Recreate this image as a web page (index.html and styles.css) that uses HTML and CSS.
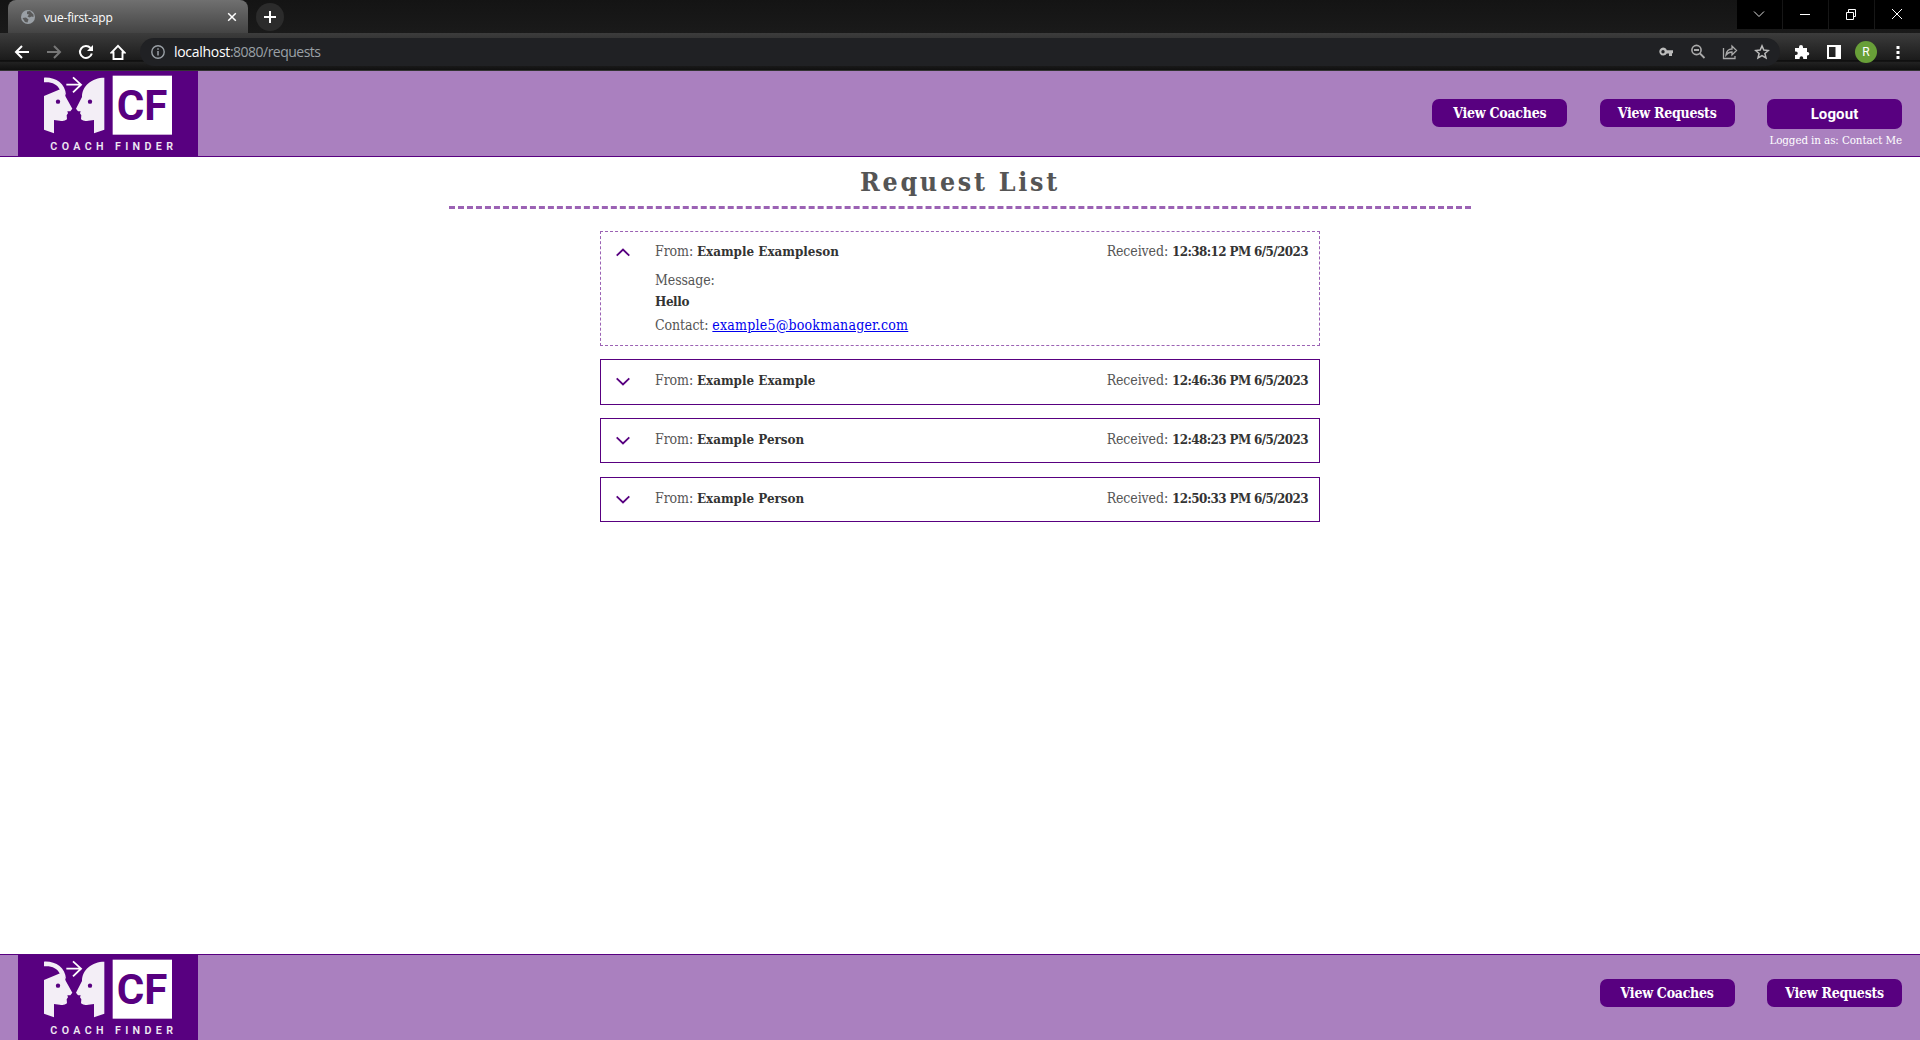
FILE: index.html
```html
<!DOCTYPE html>
<html lang="en">
<head>
<meta charset="utf-8">
<title>vue-first-app</title>
<link rel="stylesheet" href="styles.css">
</head>
<body>
<div class="browser">
  <div class="tab-strip">
    <div class="tab">
      <svg class="globe" width="14" height="14" viewBox="0 0 14 14"><circle cx="7" cy="7" r="7" fill="#9aa0a6"/><path d="M1.500 8 5 7.500 7.500 9.500 6.500 12.500 4 12ZM6 1.500 9 1l3.500 3.500L12.500 7l-2-.5-2 1-2-1L8 4.500 6 4Z" fill="#5a5a5a"/></svg>
      <span class="tab-title">vue-first-app</span>
      <svg class="tab-close" width="10" height="10" viewBox="0 0 10 10"><path d="M1.200 1.200 8.800 8.800M8.800 1.200 1.200 8.800" stroke="#fff" stroke-width="1.500"/></svg>
    </div>
    <div class="new-tab"><svg width="12" height="12" viewBox="0 0 12 12"><path d="M6 0V12M0 6H12" stroke="#fff" stroke-width="2"/></svg></div>
    <div class="window-controls">
      <div class="control"><svg width="12" height="12" viewBox="0 0 12 12"><path d="M1 3.500 6 8.500 11 3.500" fill="none" stroke="#ddd"/></svg></div>
      <div class="control"><svg width="12" height="12" viewBox="0 0 12 12"><path d="M1 6.500H11" stroke="#fff"/></svg></div>
      <div class="control"><svg width="12" height="12" viewBox="0 0 12 12"><path d="M1.500 4.500h7v7h-7zM3.500 4V1.500h7v7H9" fill="none" stroke="#fff"/></svg></div>
      <div class="control"><svg width="12" height="12" viewBox="0 0 12 12"><path d="M1 1 11 11M11 1 1 11" stroke="#fff"/></svg></div>
    </div>
  </div>
  <div class="toolbar">
    <div class="nav-icons">
      <svg width="16" height="16" viewBox="0 0 16 16"><path d="M15 8H2.500M8 2 2 8l6 6" fill="none" stroke="#fff" stroke-width="2"/></svg>
      <svg width="16" height="16" viewBox="0 0 16 16"><path d="M1 8H13.500M8 2l6 6-6 6" fill="none" stroke="#777" stroke-width="2"/></svg>
      <svg width="16" height="16" viewBox="0 0 16 16"><path d="M13.800 9.500A6 6 0 1 1 12.500 4" fill="none" stroke="#fff" stroke-width="2"/><path d="M15 1v6H9z" fill="#fff"/></svg>
      <svg width="16" height="16" viewBox="0 0 16 16"><path d="M1.500 8.500H3.500V15H12.500V8.500H14.500L8 1.800Z" fill="none" stroke="#fff" stroke-width="1.900"/></svg>
    </div>
    <div class="address">
      <svg class="info" width="14" height="14" viewBox="0 0 14 14"><circle cx="7" cy="7" r="6.200" fill="none" stroke="#9aa0a6" stroke-width="1.400"/><path d="M7 6v4.500M7 3.300v1.500" stroke="#9aa0a6" stroke-width="1.500"/></svg>
      <span class="url"><b>localhost</b>:8080/requests</span>
      <div class="page-icons">
        <svg width="16" height="16" viewBox="0 0 16 16"><path fill-rule="evenodd" d="M5 3.500a4 4 0 0 1 3.800 2.800H15v3h-1V12h-3V9.500H8.800A4 4 0 1 1 5 3.500ZM5 6a1.700 1.700 0 1 0 0 3.400A1.700 1.700 0 0 0 5 6Z" fill="#bbb"/></svg>
        <svg width="16" height="16" viewBox="0 0 16 16"><circle cx="6.500" cy="6" r="4.600" fill="none" stroke="#aaa" stroke-width="1.600"/><path d="M4 6h5M10 9.500l4.500 4.500" stroke="#aaa" stroke-width="1.800"/></svg>
        <svg width="16" height="16" viewBox="0 0 16 16"><path d="M1.500 4V14.500H13V12" fill="none" stroke="#aaa" stroke-width="1.300"/><path d="M4 11C4.500 7 7 5 10 5V2l4.500 4.500L10 11V8C7.500 8 5.500 9 4 11Z" fill="none" stroke="#aaa" stroke-width="1.300"/></svg>
        <svg width="16" height="16" viewBox="0 0 16 16"><path d="m8 1.900 1.800 4.200 4.600.4-3.500 3 1.100 4.500L8 11.600 4 14l1.100-4.500-3.500-3 4.600-.4Z" fill="none" stroke="#bbb" stroke-width="1.500"/></svg>
      </div>
    </div>
    <div class="extensions">
      <svg width="16" height="16" viewBox="0 0 16 16"><path d="M1 4h4V3a2 2 0 0 1 4 0v1h4v4h.5a1.800 1.800 0 0 1 0 3.600H13V15H9.200v-1a1.800 1.800 0 0 0-3.600 0v1H1v-4h1a1.700 1.700 0 0 0 0-3.500H1Z" fill="#fff"/></svg>
      <svg width="16" height="16" viewBox="0 0 16 16"><path fill-rule="evenodd" d="M1 1h14v14H1ZM3 3v10h6.500V3Z" fill="#fff"/></svg>
      <span class="avatar">R</span>
      <svg width="16" height="16" viewBox="0 0 16 16"><path d="M6.500 2h3v3h-3zM6.500 7h3v3h-3zM6.500 12h3v3h-3z" fill="#fff"/></svg>
    </div>
  </div>
</div>

<header class="site-bar site-header">
  <svg class="logo" width="180" height="85" viewBox="54 213 540 255">
    <path class="head" d="M132 288 184 266Q194 274 197 290L217 326 211 334H202L204 340 200 346 201 358Q192 366 179 362L162 360V400L132 389Z"/>
    <path class="head" d="M132 233C166 231 196 250 198 285L180 270C172 252 154 245 132 247Z"/>
    <path class="head" d="M313 233C276 233 246 257 246 291L228 326 234 334H242L240 340 244 346 243 358Q252 366 265 362L282 360V400L313 389Z"/>
    <circle class="eye" cx="174" cy="305" r="6.500"/><circle class="eye" cx="270" cy="305" r="6.500"/>
    <path class="arrow" d="M199 254H243M219 232 243 254 219 277"/>
    <rect x="338" y="227" width="178" height="177" fill="#fff"/>
    <text class="monogram" x="350" y="359" textLength="152" lengthAdjust="spacingAndGlyphs">CF</text>
    <text class="brand" x="151" y="451" textLength="368">COACH FINDER</text>
  </svg>
  <nav class="links">
    <a class="button">View Coaches</a>
    <a class="button">View Requests</a>
    <div class="session">
      <button class="button logout">Logout</button>
      <span class="user">Logged in as: Contact Me</span>
    </div>
  </nav>
</header>

<main class="content">
  <h1 class="title">Request List</h1>
  <ul class="requests">
    <li class="request open">
      <svg class="chevron" width="14" height="9" viewBox="0 0 14 9"><path d="M.7 7.700 7 1.500 13.300 7.700"/></svg>
      <div class="details">
        <div class="summary"><span class="from">From: <b>Example Exampleson</b></span><span class="received">Received: <b>12:38:12 PM 6/5/2023</b></span></div>
        <div class="message">Message:<br><b>Hello</b></div>
        <div class="contact">Contact: <a class="mail">example5@bookmanager.com</a></div>
      </div>
    </li>
    <li class="request">
      <svg class="chevron" width="14" height="9" viewBox="0 0 14 9"><path d="M.7 1.300 7 7.500 13.300 1.300"/></svg>
      <div class="details"><div class="summary"><span class="from">From: <b>Example Example</b></span><span class="received">Received: <b>12:46:36 PM 6/5/2023</b></span></div></div>
    </li>
    <li class="request">
      <svg class="chevron" width="14" height="9" viewBox="0 0 14 9"><path d="M.7 1.300 7 7.500 13.300 1.300"/></svg>
      <div class="details"><div class="summary"><span class="from">From: <b>Example Person</b></span><span class="received">Received: <b>12:48:23 PM 6/5/2023</b></span></div></div>
    </li>
    <li class="request">
      <svg class="chevron" width="14" height="9" viewBox="0 0 14 9"><path d="M.7 1.300 7 7.500 13.300 1.300"/></svg>
      <div class="details"><div class="summary"><span class="from">From: <b>Example Person</b></span><span class="received">Received: <b>12:50:33 PM 6/5/2023</b></span></div></div>
    </li>
  </ul>
</main>

<footer class="site-bar site-footer">
  <svg class="logo" width="180" height="85" viewBox="54 213 540 255">
    <path class="head" d="M132 288 184 266Q194 274 197 290L217 326 211 334H202L204 340 200 346 201 358Q192 366 179 362L162 360V400L132 389Z"/>
    <path class="head" d="M132 233C166 231 196 250 198 285L180 270C172 252 154 245 132 247Z"/>
    <path class="head" d="M313 233C276 233 246 257 246 291L228 326 234 334H242L240 340 244 346 243 358Q252 366 265 362L282 360V400L313 389Z"/>
    <circle class="eye" cx="174" cy="305" r="6.500"/><circle class="eye" cx="270" cy="305" r="6.500"/>
    <path class="arrow" d="M199 254H243M219 232 243 254 219 277"/>
    <rect x="338" y="227" width="178" height="177" fill="#fff"/>
    <text class="monogram" x="350" y="359" textLength="152" lengthAdjust="spacingAndGlyphs">CF</text>
    <text class="brand" x="151" y="451" textLength="368">COACH FINDER</text>
  </svg>
  <nav class="links">
    <a class="button">View Coaches</a>
    <a class="button">View Requests</a>
  </nav>
</footer>
</body>
</html>
```
FILE: styles.css
```css
* { box-sizing: border-box; }
body {
  margin: 0;
  height: 1040px;
  display: flex;
  flex-direction: column;
  overflow: hidden;
  background: #fff;
  color: #555;
  font-family: "Roboto Slab", "DejaVu Serif Condensed", "DejaVu Serif", serif;
  font-stretch: condensed;
}
svg { flex: none; display: block; }

/* Browser frame */
.browser { height: 71px; font-family: "Open Sans", sans-serif; font-stretch: normal; }
.tab-strip { height: 33px; display: flex; background: linear-gradient(#141414, #1a1a1a); }
.tab {
  width: 240px;
  margin-left: 8px;
  padding: 1px 11px 0 13px;
  display: flex;
  align-items: center;
  border-radius: 8px 8px 0 0;
  background: linear-gradient(#707070, #444);
}
.tab-title { flex: 1; margin-left: 9px; color: #fff; font-size: 12px; letter-spacing: -.2px; }
.new-tab {
  width: 28px;
  height: 28px;
  margin: 3px 0 0 8px;
  display: grid;
  place-items: center;
  border-radius: 50%;
  background: #2b2b2b;
}
.window-controls { margin-left: auto; display: flex; gap: 1px; height: 29px; }
.control { width: 45px; padding: 0 1px 1px 0; display: grid; place-items: center; background: #000; }
.toolbar {
  height: 38px;
  padding: 5px 14px 5px 14px;
  display: flex;
  background: linear-gradient(#3c3c3c 0, #1b1b1b 27px, #050505 28px, #222 29px, #101010 37px, #333 37px);
}
.nav-icons { width: 126px; display: flex; gap: 16px; align-items: center; }
.address {
  width: 1640px;
  padding: 0 10px 0 11px;
  display: flex;
  align-items: center;
  border-radius: 14px;
  background: #202124;
}
.url { margin-left: 9px; color: #9aa0a6; font-size: 14px; line-height: 18px; letter-spacing: -.52px; }
.url b { color: #fff; font-weight: 400; letter-spacing: -.3px; }
.page-icons { margin-left: auto; display: flex; gap: 16px; }
.extensions { margin-left: 14px; display: flex; align-items: center; gap: 16px; }
.avatar {
  width: 22px;
  height: 22px;
  margin: 0 -3px;
  border-radius: 50%;
  background: #689f38;
  color: #fff;
  font: 12px/22px Roboto, sans-serif;
  text-align: center;
}

/* Header and footer bars */
.site-bar {
  height: 86px;
  padding: 0 18px;
  display: flex;
  justify-content: space-between;
  background: #aa80bf;
}
.site-header { border-bottom: 1px solid #580080; }
.site-footer { margin-top: auto; border-top: 1px solid #580080; }
.logo { background: #580080; }
.head { fill: #f3eef6; }
.eye { fill: #580080; }
.arrow { fill: none; stroke: #fff; stroke-width: 5.500; }
.monogram { fill: #580080; font: 700 128px Roboto, sans-serif; }
.brand { fill: #efe8f3; font: 600 32px Roboto, sans-serif; }
.links { display: flex; gap: 32.400px; padding-top: 28px; align-items: flex-start; }
.site-footer .links { padding-top: 24px; }
.button {
  width: 135px;
  height: 28px;
  border: 0;
  border-radius: 7px;
  background: #580080;
  color: #fff;
  font-size: 14px;
  font-weight: 700;
  line-height: 28px;
  letter-spacing: -.25px;
  text-align: center;
  white-space: nowrap;
}
.session { width: 135px; display: flex; flex-direction: column; align-items: flex-end; }
.logout {
  height: 30px;
  padding: 0;
  font: 700 15px/30px Roboto, sans-serif;
  letter-spacing: .1px;
}
.user { margin-top: 4px; color: #fff; font-size: 11.500px; line-height: 14px; letter-spacing: -.1px; white-space: nowrap; }

/* Request list */
.title {
  width: 1022px;
  height: 52px;
  margin: 0 auto;
  padding-top: 7px;
  border-bottom: 3px dashed #9b62b4;
  font-size: 26.500px;
  line-height: 35px;
  letter-spacing: 2.750px;
  text-align: center;
}
.requests { width: 720px; margin: 22px auto 0; padding: 0; list-style: none; }
.request {
  height: 45.500px;
  margin-bottom: 13.300px;
  padding: 10px 11px 0 15px;
  display: flex;
  border: 1px solid #580080;
}
.request.open { height: 115px; margin-bottom: 13px; padding-top: 9px; border: 1px dashed #9b62b4; }
.chevron { margin: 7px 25.500px 0 -.5px; fill: none; stroke: #580080; stroke-width: 1.800; }
.details { flex: 1; font-size: 14px; line-height: 21px; letter-spacing: -.1px; }
.details b { color: #333; font-size: 13.300px; letter-spacing: 0; }
.details .received b { letter-spacing: -.600px; }
.details .message b { letter-spacing: -.4px; }
.summary { display: flex; justify-content: space-between; }
.message { margin-top: 8px; }
.contact { margin-top: 3px; }
.mail { color: #00e; letter-spacing: .220px; text-decoration: underline; }
```
